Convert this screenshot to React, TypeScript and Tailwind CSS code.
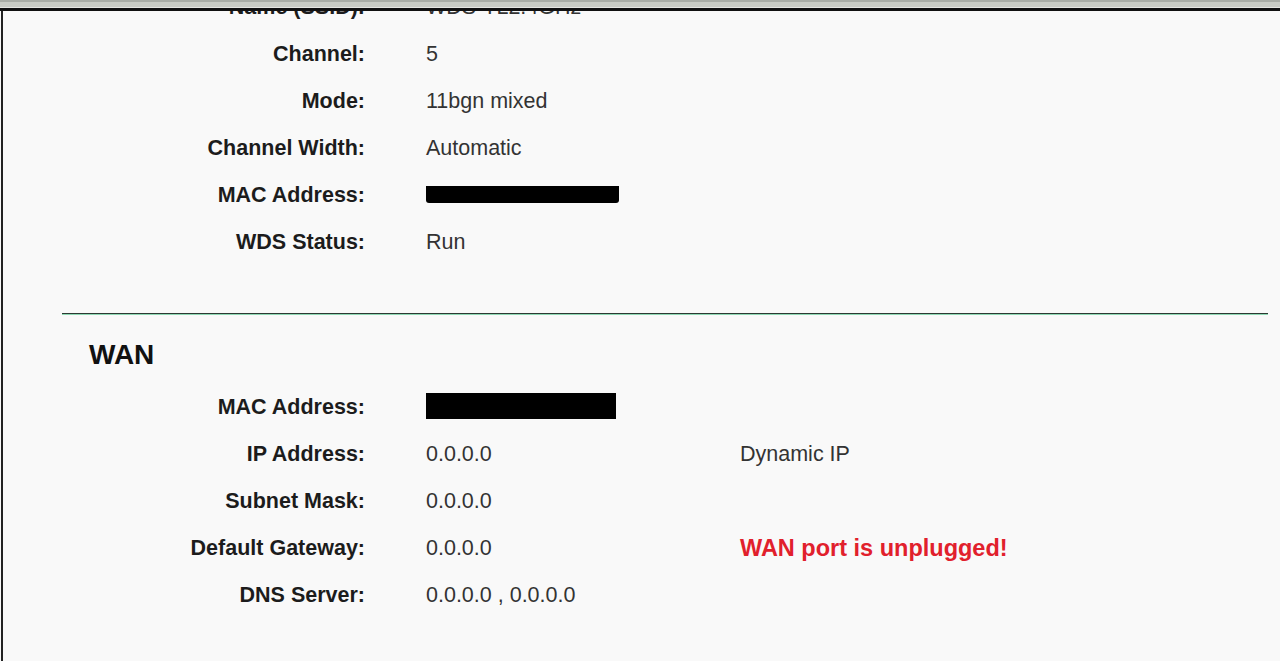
const wirelessRows: { label: string; value?: string; masked?: boolean }[] = [
  { label: 'Name (SSID):', value: 'WDS-TL2.4GHz' },
  { label: 'Channel:', value: '5' },
  { label: 'Mode:', value: '11bgn mixed' },
  { label: 'Channel Width:', value: 'Automatic' },
  { label: 'MAC Address:', masked: true },
  { label: 'WDS Status:', value: 'Run' },
];

const wanRows: { label: string; value?: string; masked?: boolean; note?: string; alert?: boolean }[] = [
  { label: 'MAC Address:', masked: true },
  { label: 'IP Address:', value: '0.0.0.0', note: 'Dynamic IP' },
  { label: 'Subnet Mask:', value: '0.0.0.0' },
  { label: 'Default Gateway:', value: '0.0.0.0', note: 'WAN port is unplugged!', alert: true },
  { label: 'DNS Server:', value: '0.0.0.0 , 0.0.0.0' },
];

function Row({
  label,
  children,
  note,
  alert,
}: {
  label: string;
  children: React.ReactNode;
  note?: string;
  alert?: boolean;
}) {
  return (
    <div className="flex h-[47px] items-center">
      <div className="w-[362px] shrink-0 text-right font-bold text-[#1c1c1c]">{label}</div>
      <div className="ml-[61px] w-[314px] shrink-0 text-[#333]">{children}</div>
      {note && (
        <div className={alert ? 'text-[23.5px] font-bold text-[#e1202c]' : 'text-[#333]'}>
          {note}
        </div>
      )}
    </div>
  );
}

export default function App() {
  return (
    <div
      className="relative flex h-[661px] w-[1280px] flex-col overflow-hidden bg-[#f9f9f9] text-[21.5px] leading-none"
      style={{ fontFamily: '"Liberation Sans", Arial, sans-serif' }}
    >
      {/* window frame top edge */}
      <div className="relative z-10 shrink-0 bg-[#f9f9f9]">
        <div className="h-[2px] bg-[#a9ada6]" />
        <div className="h-[5px] bg-[#c9ccc5]" />
        <div className="h-[1px] bg-[#e6e7e3]" />
        <div className="h-[3px] bg-[#111]" />
      </div>

      <div className="ml-[1px] flex-1 border-l-2 border-[#222]">
        <div className="mt-[-27px]">
          {wirelessRows.map((row) => (
            <Row key={row.label} label={row.label}>
              {row.masked ? (
                <span className="mt-[-3px] block h-[17px] w-[193px] rounded-b-[3px] bg-black" />
              ) : (
                row.value
              )}
            </Row>
          ))}
        </div>

        <div className="mr-[12px] ml-[59px] mt-[47px] h-[2px] border-t border-[#2c3a33] bg-[#8fd8b4]" />

        <h2 className="pl-[86px] pt-[24px] pb-[13px] text-[28px] font-bold leading-[32px] text-[#111]">
          WAN
        </h2>

        {wanRows.map((row) => (
          <Row key={row.label} label={row.label} note={row.note} alert={row.alert}>
            {row.masked ? (
              <span className="mt-[-3px] block h-[26px] w-[190px] bg-black" />
            ) : (
              row.value
            )}
          </Row>
        ))}
      </div>
    </div>
  );
}
